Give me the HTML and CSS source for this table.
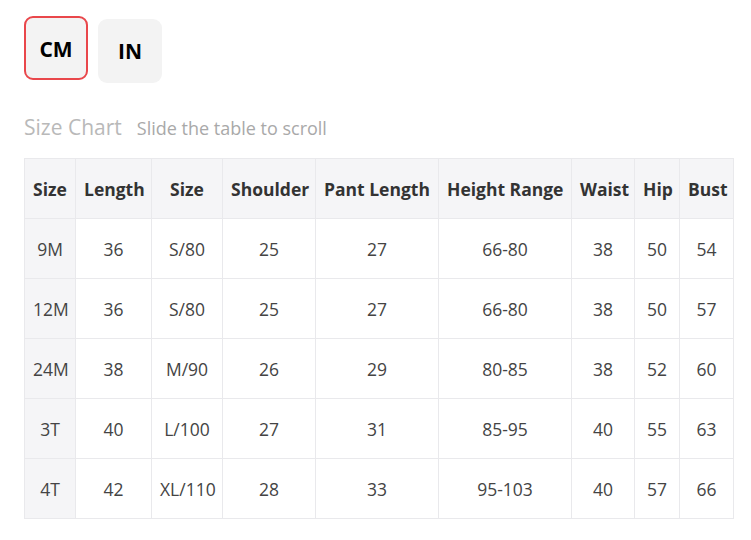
FILE: index.html
```html
<!DOCTYPE html>
<html>
<head>
<meta charset="utf-8">
<link rel="stylesheet" href="styles.css">
</head>
<body>
<div class="page">
  <div class="units">
    <button class="unit active">CM</button>
    <button class="unit">IN</button>
  </div>
  <div class="heading">
    <span class="title">Size Chart</span>
    <span class="hint">Slide the table to scroll</span>
  </div>
  <table class="chart">
    <colgroup>
      <col class="c1"><col class="c2"><col class="c3"><col class="c4"><col class="c5"><col class="c6"><col class="c7"><col class="c8"><col class="c9">
    </colgroup>
    <thead>
      <tr><th>Size</th><th>Length</th><th>Size</th><th>Shoulder</th><th>Pant Length</th><th>Height Range</th><th>Waist</th><th>Hip</th><th>Bust</th></tr>
    </thead>
    <tbody>
      <tr><td class="first">9M</td><td>36</td><td>S/80</td><td>25</td><td>27</td><td>66-80</td><td>38</td><td>50</td><td>54</td></tr>
      <tr><td class="first">12M</td><td>36</td><td>S/80</td><td>25</td><td>27</td><td>66-80</td><td>38</td><td>50</td><td>57</td></tr>
      <tr><td class="first">24M</td><td>38</td><td>M/90</td><td>26</td><td>29</td><td>80-85</td><td>38</td><td>52</td><td>60</td></tr>
      <tr><td class="first">3T</td><td>40</td><td>L/100</td><td>27</td><td>31</td><td>85-95</td><td>40</td><td>55</td><td>63</td></tr>
      <tr><td class="first">4T</td><td>42</td><td>XL/110</td><td>28</td><td>33</td><td>95-103</td><td>40</td><td>57</td><td>66</td></tr>
    </tbody>
  </table>
</div>
</body>
</html>
```
FILE: styles.css
```css
* { box-sizing: border-box; }
html, body { margin: 0; padding: 0; background: #fff; }
body { font-family: "Open Sans", "Noto Sans", sans-serif; }
.page { padding: 16px 24px; }
.units { display: flex; gap: 10px; align-items: flex-start; }
.unit {
  width: 64px; height: 64px;
  border: 2px solid transparent;
  border-radius: 9px;
  background: #f3f3f3;
  font-family: "Open Sans", sans-serif;
  font-weight: 700;
  font-size: 21px;
  color: #000;
  padding: 0;
}
.unit.active { border-color: #e9474b; padding-top: 2px; }
.unit:not(.active) { margin-top: 3px; }
.heading { margin-top: 30px; display: flex; align-items: baseline; height: 30px; }
.title { font-size: 21px; color: #b9b9b9; }
.hint { font-size: 18px; color: #a9a9a9; margin-left: 15px; }
.chart {
  margin-top: 15px;
  border-collapse: collapse;
  table-layout: fixed;
  width: 709px;
  font-size: 17.5px;
  color: #444;
}
.chart th, .chart td {
  border: 1px solid #e9e9ec;
  height: 60px;
  padding: 0 8px;
  text-align: center;
  white-space: nowrap;
}
.chart th { background: #f5f5f7; color: #333; font-weight: 700; }
.chart td.first { background: #f5f5f7; }
.c1 { width: 51px; } .c2 { width: 76px; } .c3 { width: 71px; }
.c4 { width: 93px; } .c5 { width: 123px; } .c6 { width: 133px; }
.c7 { width: 63px; } .c8 { width: 45px; } .c9 { width: 54px; }
```
